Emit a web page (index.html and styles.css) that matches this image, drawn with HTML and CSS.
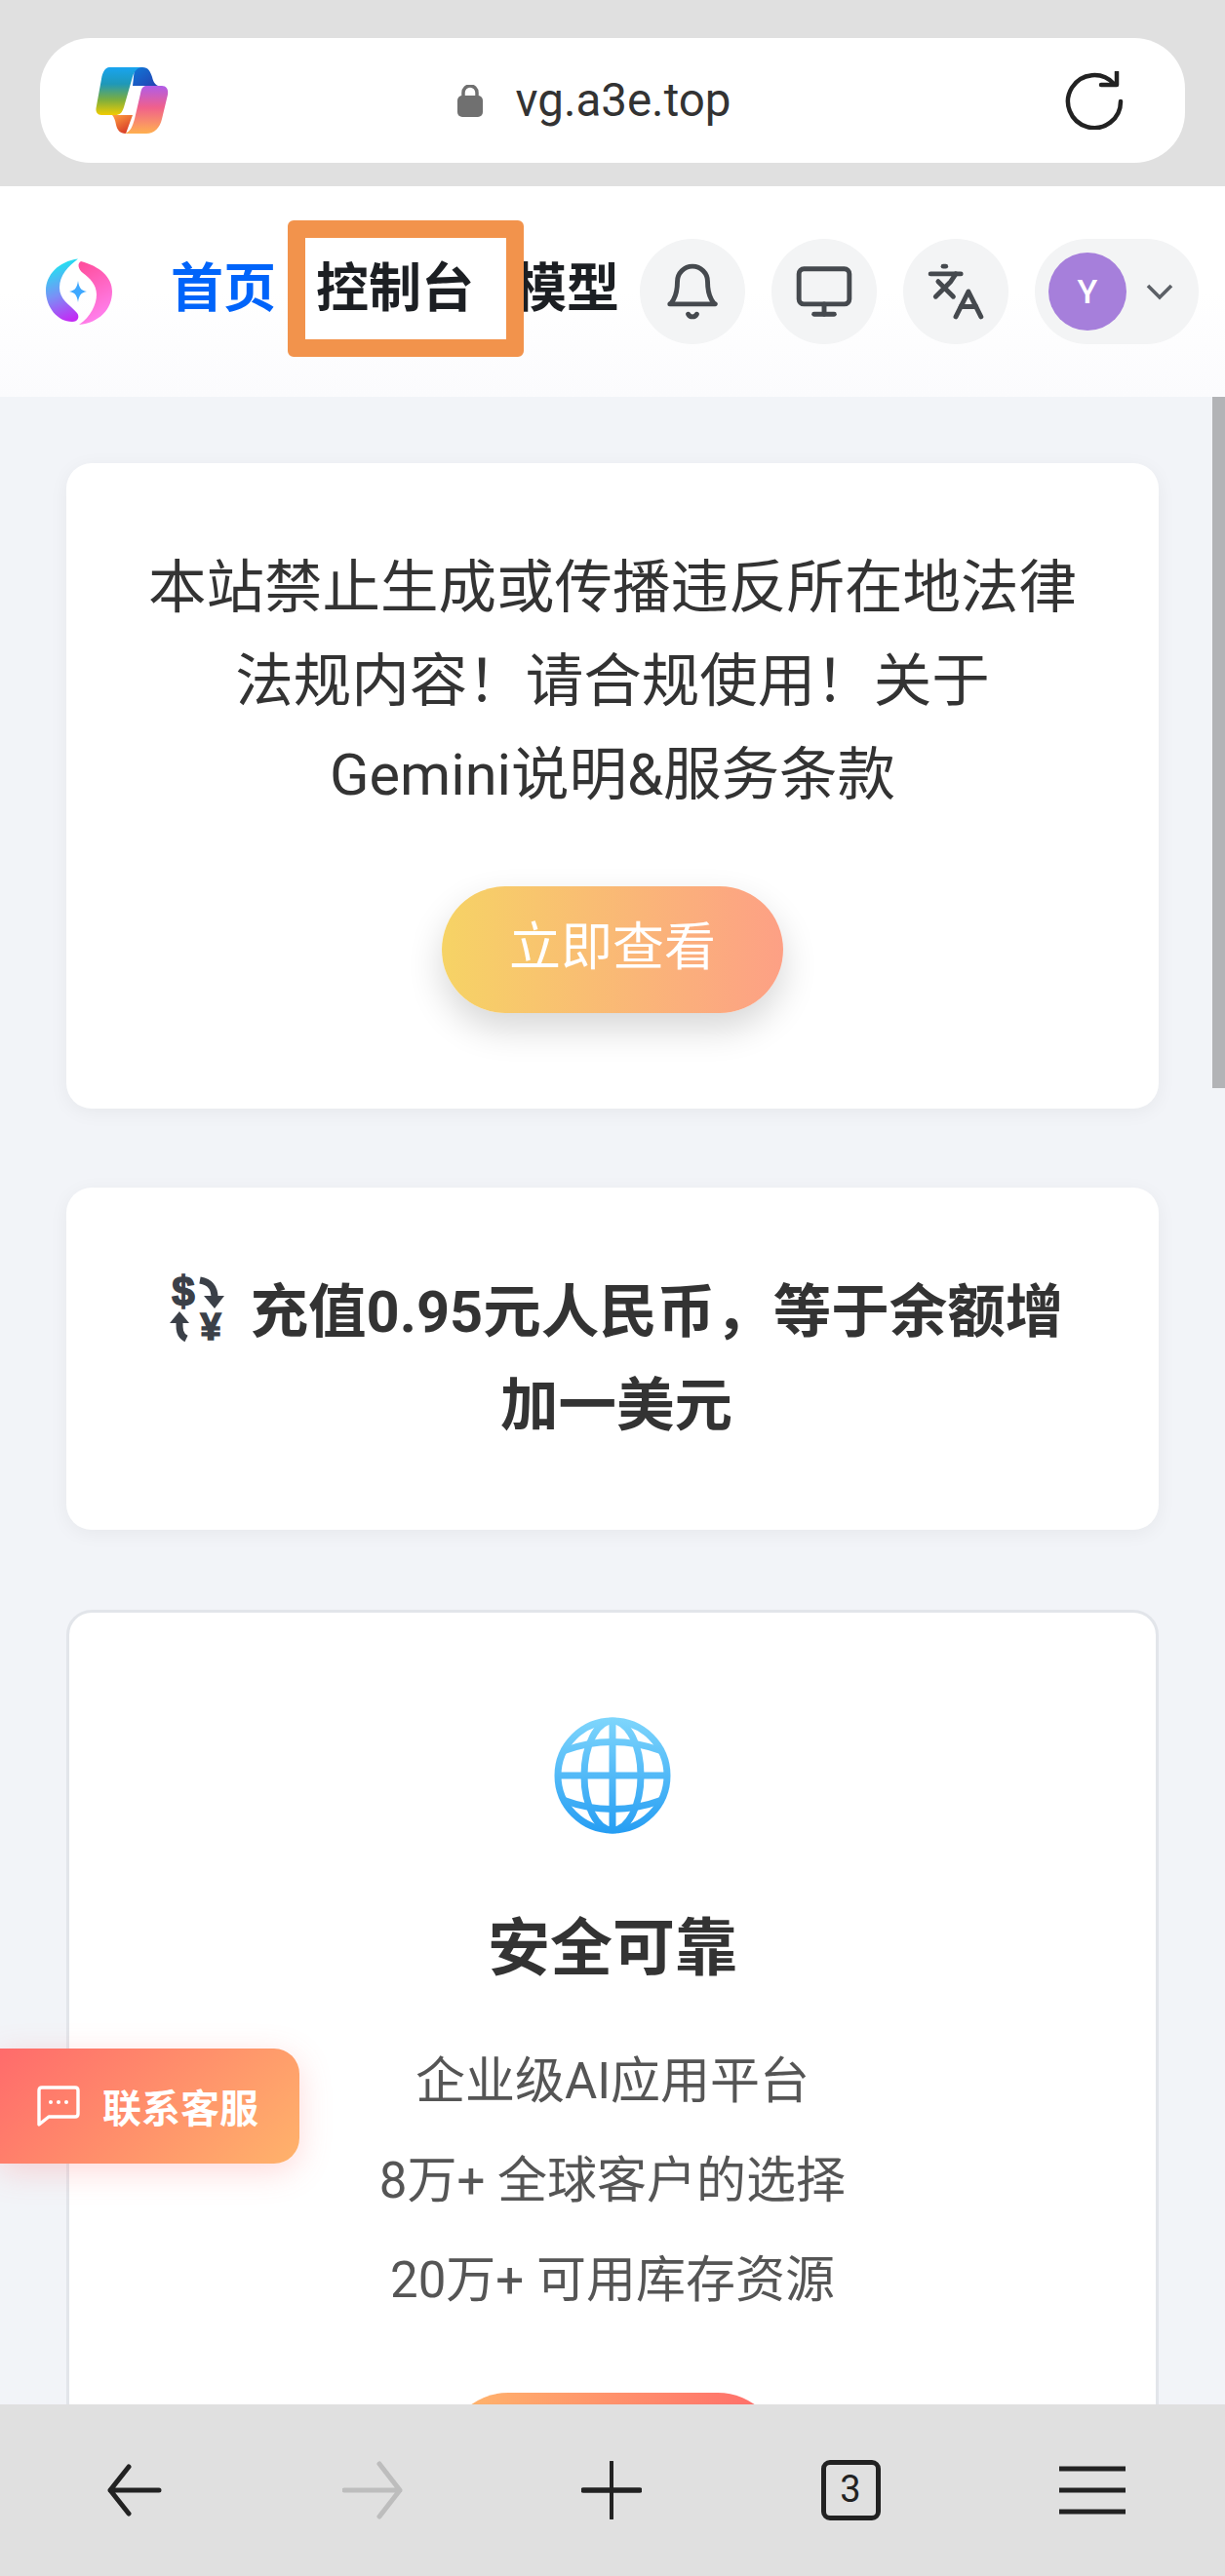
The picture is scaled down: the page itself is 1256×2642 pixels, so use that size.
FILE: index.html
```html
<!DOCTYPE html>
<html lang="zh-CN">

<head>
    <meta charset="UTF-8">
    <meta name="viewport" content="width=device-width, initial-scale=1.0">
    <title>vg.a3e.top</title>
    <link rel="stylesheet" href="styles.css">
</head>

<body>

<div class="phone">

    <div class="browser-top">
        <div class="url-pill">
            <svg class="copilot" viewBox="0 0 75 68">
                <defs>
                    <linearGradient id="cpLeft" x1="0" y1="0" x2="0" y2="1">
                        <stop offset="0" stop-color="#18a4f0"/>
                        <stop offset="0.35" stop-color="#1f98b8"/>
                        <stop offset="0.68" stop-color="#7cae3e"/>
                        <stop offset="1" stop-color="#f2cc00"/>
                    </linearGradient>
                    <linearGradient id="cpTop" x1="0" y1="0" x2="1" y2="1">
                        <stop offset="0" stop-color="#0f78d8"/>
                        <stop offset="1" stop-color="#2440b0"/>
                    </linearGradient>
                    <linearGradient id="cpRight" x1="0" y1="0" x2="0" y2="1">
                        <stop offset="0" stop-color="#b05ce8"/>
                        <stop offset="0.45" stop-color="#f0608c"/>
                        <stop offset="1" stop-color="#ffb050"/>
                    </linearGradient>
                    <linearGradient id="cpLow" x1="0" y1="0" x2="0.6" y2="1">
                        <stop offset="0" stop-color="#ffa040"/>
                        <stop offset="1" stop-color="#d83c28"/>
                    </linearGradient>
                </defs>
                <path fill="url(#cpTop)" d="M40 0 H48 C54 0 56 4 58 10 C59 14 60 17 64 19 H38 Z"/>
                <path fill="url(#cpLow)" d="M17 49 H38 L31 68 C25 68 22 64 21 59 C20 54 19 51 17 49 Z"/>
                <path fill="url(#cpLeft)" d="M14 0 H48 C42 0 39 5 37 13 L29 41 C27 47 25 49 20 49 H6 C2 49 0 46 0.5 42 L6 12 C7 5 10 0 14 0 Z"/>
                <path fill="url(#cpRight)" d="M51 19 H68 C72 19 75 22 74 28 L68 53 C66 62 60 68 52 68 H30 C36 66 38 60 40 53 L46 27 C47 22 48 20 51 19 Z"/>
            </svg>
            <div class="url-text">
                <svg class="lock" viewBox="0 0 26 33">
                    <path d="M6 14 V8 a7 7 0 0 1 14 0 V14" fill="none" stroke="#707070" stroke-width="3.5"/>
                    <rect y="11" width="26" height="22" rx="5" fill="#707070"/>
                </svg>
                <span>vg.a3e.top</span>
            </div>
            <svg class="reload" viewBox="0 0 60 60">
                <path d="M50 13 A27 27 0 1 0 57 31" fill="none" stroke="#222" stroke-width="4.5" stroke-linecap="round"/>
                <path d="M37 14 H53 V1" fill="none" stroke="#222" stroke-width="4.5" stroke-linecap="round" stroke-linejoin="round"/>
            </svg>
        </div>
    </div>

    <header class="site-header">
        <svg class="site-logo" viewBox="0 0 68 68">
            <defs>
                <linearGradient id="logoLeft" x1="0.4" y1="0" x2="0.6" y2="1">
                    <stop offset="0" stop-color="#16ecf0"/>
                    <stop offset="0.55" stop-color="#7a90f6"/>
                    <stop offset="1" stop-color="#c22cf4"/>
                </linearGradient>
                <linearGradient id="logoRight" x1="0.3" y1="0" x2="0.6" y2="1">
                    <stop offset="0" stop-color="#ff4f9e"/>
                    <stop offset="1" stop-color="#ff84f4"/>
                </linearGradient>
            </defs>
            <path fill="url(#logoLeft)" d="M33 0.5 C13 3 0 17 0 33 C0 50 12 65 27 65 C33 65 35 60 32 56 C24 47 14 42 14 30 C14 17 23 8 33 0.5 Z"/>
            <path fill="url(#logoRight)" d="M36 3 C55 8 68 19 68 34 C68 52 55 66 34 68 C46 60 52 47 52 37 C52 27 45 20 38 15 C33 11 32 5 36 3 Z"/>
            <path fill="#3ea8ff" d="M33 23 C34 30 36 33 42 34 C36 35 34 38 33 45 C32 38 30 35 24 34 C30 33 32 30 33 23 Z"/>
        </svg>
        <nav class="site-nav">
            <a class="nav-link active" href="#">首页</a>
            <a class="nav-link marked" href="#">控制台</a>
            <a class="nav-link" href="#">模型</a>
        </nav>
        <div class="header-actions">
            <button class="round-btn">
                <svg viewBox="0 0 24 24"><path d="M6 8a6 6 0 0 1 12 0c0 7 3 9 3 9H3s3-2 3-9"/><path d="M10.3 21a1.94 1.94 0 0 0 3.4 0"/></svg>
            </button>
            <button class="round-btn">
                <svg viewBox="0 0 24 24"><rect x="2" y="3" width="20" height="14" rx="2"/><path d="M12 17v4"/><path d="M8 21h8"/></svg>
            </button>
            <button class="round-btn">
                <svg viewBox="0 0 24 24"><path d="m5 8 6 6"/><path d="m4 14 6-6 2-3"/><path d="M2 5h12"/><path d="M7 2h1"/><path d="m22 22-5-10-5 10"/><path d="M14 18h6"/></svg>
            </button>
            <div class="user-pill">
                <span class="avatar">Y</span>
                <svg class="chevron" viewBox="0 0 28 18"><path d="M2 3 L14 15 L26 3"/></svg>
            </div>
        </div>
    </header>

    <main class="content">
        <section class="card notice">
            <p>本站禁止生成或传播违反所在地法律<br>法规内容！请合规使用！关于<br>Gemini说明&amp;服务条款</p>
            <a class="view-btn" href="#">立即查看</a>
        </section>

        <section class="card rate">
            <p>
                <svg class="exchange" viewBox="0 -10 56 86">
                    <text x="14" y="29" class="ex-sign ex-dollar">$</text>
                    <text x="42" y="64" class="ex-sign">¥</text>
                    <path d="M31 3 C42 5 46 11 46 21" class="ex-arrow"/>
                    <path d="M35 19 H56 L46 32 Z" class="ex-head"/>
                    <path d="M17 63 C9 59 10 51 10 45" class="ex-arrow"/>
                    <path d="M0 47 H20 L10 35 Z" class="ex-head"/>
                </svg>
                充值0.95元人民币，等于余额增加一美元
            </p>
        </section>

        <section class="card feature">
            <svg class="globe" viewBox="0 0 120 120">
                <defs>
                    <linearGradient id="globeLine" gradientUnits="userSpaceOnUse" x1="0" y1="0" x2="0" y2="120">
                        <stop offset="0" stop-color="#7fd6fc"/>
                        <stop offset="1" stop-color="#259df3"/>
                    </linearGradient>
                </defs>
                <g fill="none" stroke="url(#globeLine)" stroke-width="7">
                    <circle cx="60" cy="60" r="56"/>
                    <ellipse cx="60" cy="60" rx="29" ry="56"/>
                    <path d="M60 4 V116"/>
                    <path d="M4 60 H116"/>
                    <path d="M9 35 Q60 16 111 35"/>
                    <path d="M9 85 Q60 104 111 85"/>
                </g>
            </svg>
            <h3>安全可靠</h3>
            <ul class="feature-list">
                <li>企业级AI应用平台</li>
                <li>8万+ 全球客户的选择</li>
                <li>20万+ 可用库存资源</li>
            </ul>
            <a class="start-btn" href="#"></a>
        </section>

        <a class="support" href="#">
            <svg viewBox="0 0 44 42">
                <path d="M5 2 H39 Q42 2 42 5 V29 Q42 32 39 32 H12 L2 40 V5 Q2 2 5 2 Z" fill="none" stroke="#fff" stroke-width="3.4" stroke-linejoin="round"/>
                <circle cx="14" cy="17" r="2" fill="#fff"/>
                <circle cx="22" cy="17" r="2" fill="#fff"/>
                <circle cx="30" cy="17" r="2" fill="#fff"/>
            </svg>
            <span>联系客服</span>
        </a>

        <div class="scroll-thumb"></div>
    </main>

    <footer class="browser-bottom">
        <svg class="tool" viewBox="0 0 62 60">
            <path d="M27 6 L8 30 L27 54 M8 30 H58" fill="none" stroke="#222" stroke-width="5" stroke-linecap="round" stroke-linejoin="round"/>
        </svg>
        <svg class="tool" viewBox="0 0 62 60">
            <path d="M38 3 L59 30 L38 57 M59 30 H2" fill="none" stroke="#bdbdbd" stroke-width="5" stroke-linecap="round" stroke-linejoin="round"/>
        </svg>
        <svg class="tool" viewBox="0 0 62 60">
            <path d="M31 1 V59" fill="none" stroke="#222" stroke-width="4" stroke-linecap="round"/>
            <path d="M2 30 H60" fill="none" stroke="#222" stroke-width="5.5" stroke-linecap="round"/>
        </svg>
        <div class="tab-count">3</div>
        <svg class="tool" viewBox="0 0 68 60">
            <path d="M0 8 H68 M0 30 H68 M0 52 H68" fill="none" stroke="#222" stroke-width="5"/>
        </svg>
    </footer>

</div>

</body>

</html>
```

FILE: styles.css
```css
body, html {
    margin: 0;
    padding: 0;
    height: 100%;
    overflow: hidden;
}

body {
    font-family: "Roboto", "Noto Sans CJK SC", sans-serif;
    color: #333;
}

a {
    text-decoration: none;
}

.phone {
    display: flex;
    flex-direction: column;
    height: 2642px;
    background-color: #f2f4f8;
}

/* browser chrome */
.browser-top {
    flex: 0 0 191px;
    box-sizing: border-box;
    padding: 39px 41px 24px;
    background-color: #e0e0e0;
}

.url-pill {
    display: flex;
    align-items: center;
    justify-content: space-between;
    box-sizing: border-box;
    height: 128px;
    padding: 0 63px 0 57px;
    background-color: white;
    border-radius: 52px;
}

.copilot {
    width: 75px;
    height: 68px;
}

.url-text {
    display: flex;
    align-items: center;
    gap: 34px;
    margin-right: 47px;
    font-size: 47.5px;
    color: #333;
}

.lock {
    width: 26px;
    height: 33px;
}

.reload {
    width: 60px;
    height: 60px;
}

/* site header */
.site-header {
    flex: 0 0 216px;
    display: flex;
    align-items: center;
    box-sizing: border-box;
    padding: 0 27px 0 47px;
    background: linear-gradient(#fff 50%, #fbfbfd);
}

.site-logo {
    width: 68px;
    height: 68px;
    flex: none;
}

.site-nav {
    display: flex;
    align-items: center;
    gap: 41px;
    margin-left: 60px;
    padding-bottom: 4px;
}

.nav-link {
    font-size: 54px;
    line-height: 70px;
    font-weight: 700;
    color: #1c1f23;
    white-space: nowrap;
}

.nav-link.active {
    color: #0064fa;
}

.nav-link.marked {
    position: relative;
    z-index: 1;
}

/* orange annotation drawn over the nav */
.nav-link.marked::before {
    content: "";
    position: absolute;
    z-index: -1;
    top: -36px;
    bottom: -34px;
    left: -29px;
    right: -51px;
    border: 18px solid #f2934c;
    border-radius: 6px;
    background-color: white;
}

.header-actions {
    display: flex;
    align-items: center;
    gap: 27px;
    margin-left: auto;
}

.round-btn {
    display: flex;
    align-items: center;
    justify-content: center;
    width: 108px;
    height: 108px;
    padding: 0;
    border: none;
    border-radius: 50%;
    background-color: #f3f4f5;
}

.round-btn svg {
    width: 62px;
    height: 62px;
    fill: none;
    stroke: #45494e;
    stroke-width: 1.9;
    stroke-linecap: round;
    stroke-linejoin: round;
}

.user-pill {
    display: flex;
    align-items: center;
    gap: 20px;
    box-sizing: border-box;
    width: 168px;
    height: 108px;
    padding-left: 14px;
    border-radius: 54px;
    background-color: #f3f4f5;
}

.avatar {
    display: flex;
    align-items: center;
    justify-content: center;
    width: 80px;
    height: 80px;
    border-radius: 50%;
    background-color: #a67fdb;
    color: white;
    font-size: 34px;
    font-weight: 500;
}

.chevron {
    width: 28px;
    height: 18px;
    fill: none;
    stroke: #5c6066;
    stroke-width: 3.6;
}

/* page body */
.content {
    position: relative;
    flex: 1;
    min-height: 0;
    overflow: hidden;
    box-sizing: border-box;
    padding: 68px 68px 0 68px;
}

.card {
    background-color: white;
    border-radius: 26px;
    text-align: center;
    box-shadow: 0 4px 20px rgba(0, 0, 0, 0.05);
}

.card p {
    margin: 0;
    font-size: 59.5px;
    line-height: 96px;
}

.notice {
    box-sizing: border-box;
    height: 662px;
    padding: 80px 70px 0;
    margin-bottom: 81px;
}

.view-btn {
    display: block;
    width: 350px;
    height: 130px;
    margin: 66px auto 0;
    border-radius: 65px;
    background: linear-gradient(90deg, #f6d365, #fda085);
    color: white;
    font-size: 53px;
    line-height: 126px;
    box-shadow: 0 16px 36px rgba(0, 0, 0, 0.16);
}

.rate {
    box-sizing: border-box;
    height: 351px;
    padding: 80px 85px 0 93px;
    margin-bottom: 82px;
}

.rate p {
    font-weight: 700;
}

.exchange {
    display: inline-block;
    width: 56px;
    height: 86px;
    margin-right: 12px;
    vertical-align: -20px;
}

.ex-sign {
    font-family: "Liberation Sans", sans-serif;
    font-size: 38px;
    font-weight: 700;
    text-anchor: middle;
    fill: #3b4048;
    stroke: #3b4048;
    stroke-width: 1.6;
}

.ex-dollar {
    font-size: 42px;
}

.ex-arrow {
    fill: none;
    stroke: #3b4048;
    stroke-width: 7;
}

.ex-head {
    fill: #3b4048;
}

.feature {
    box-sizing: border-box;
    height: 1000px;
    padding-top: 107px;
    border: 3px solid #e2e5ea;
    box-shadow: none;
}

.globe {
    display: block;
    width: 120px;
    height: 120px;
    margin: 0 auto;
}

.feature h3 {
    margin: 76px 0 0;
    font-size: 64px;
    line-height: 84px;
    font-weight: 700;
    color: #333;
}

.feature-list {
    margin: 43px 0 0;
    padding: 0;
    list-style: none;
    font-size: 51px;
    line-height: 102px;
    color: #555;
}

.start-btn {
    display: block;
    width: 345px;
    height: 130px;
    margin: 64px auto 0;
    border-radius: 65px;
    background: linear-gradient(90deg, #ffb86c, #ff6b6b);
}

/* floating widget and scrollbar sit over the page */
.support {
    position: absolute;
    left: 0;
    top: 1694px;
    display: flex;
    align-items: center;
    gap: 23px;
    box-sizing: border-box;
    width: 307px;
    height: 118px;
    padding-left: 38px;
    border-radius: 0 26px 26px 0;
    background: linear-gradient(135deg, #ff6b6b, #ffb36b);
    color: white;
    box-shadow: 0 8px 32px rgba(255, 107, 107, 0.25);
}

.support svg {
    width: 44px;
    height: 42px;
    flex: none;
}

.support span {
    font-size: 40px;
    font-weight: 700;
    white-space: nowrap;
}

.scroll-thumb {
    position: absolute;
    top: 0;
    right: 0;
    width: 13px;
    height: 709px;
    background-color: #b2b3b6;
}

/* bottom toolbar */
.browser-bottom {
    position: relative;
    flex: 0 0 176px;
    display: flex;
    align-items: center;
    justify-content: space-between;
    box-sizing: border-box;
    padding: 0 102px 0 105px;
    background-color: #e0e0e0;
}

.tool {
    width: 62px;
    height: 60px;
}

.browser-bottom .tool:last-child {
    width: 68px;
}

.tab-count {
    box-sizing: border-box;
    width: 61px;
    height: 62px;
    border: 5px solid #222;
    border-radius: 9px;
    font-family: "Roboto", sans-serif;
    font-size: 38px;
    line-height: 51px;
    text-align: center;
    color: #222;
}
```
